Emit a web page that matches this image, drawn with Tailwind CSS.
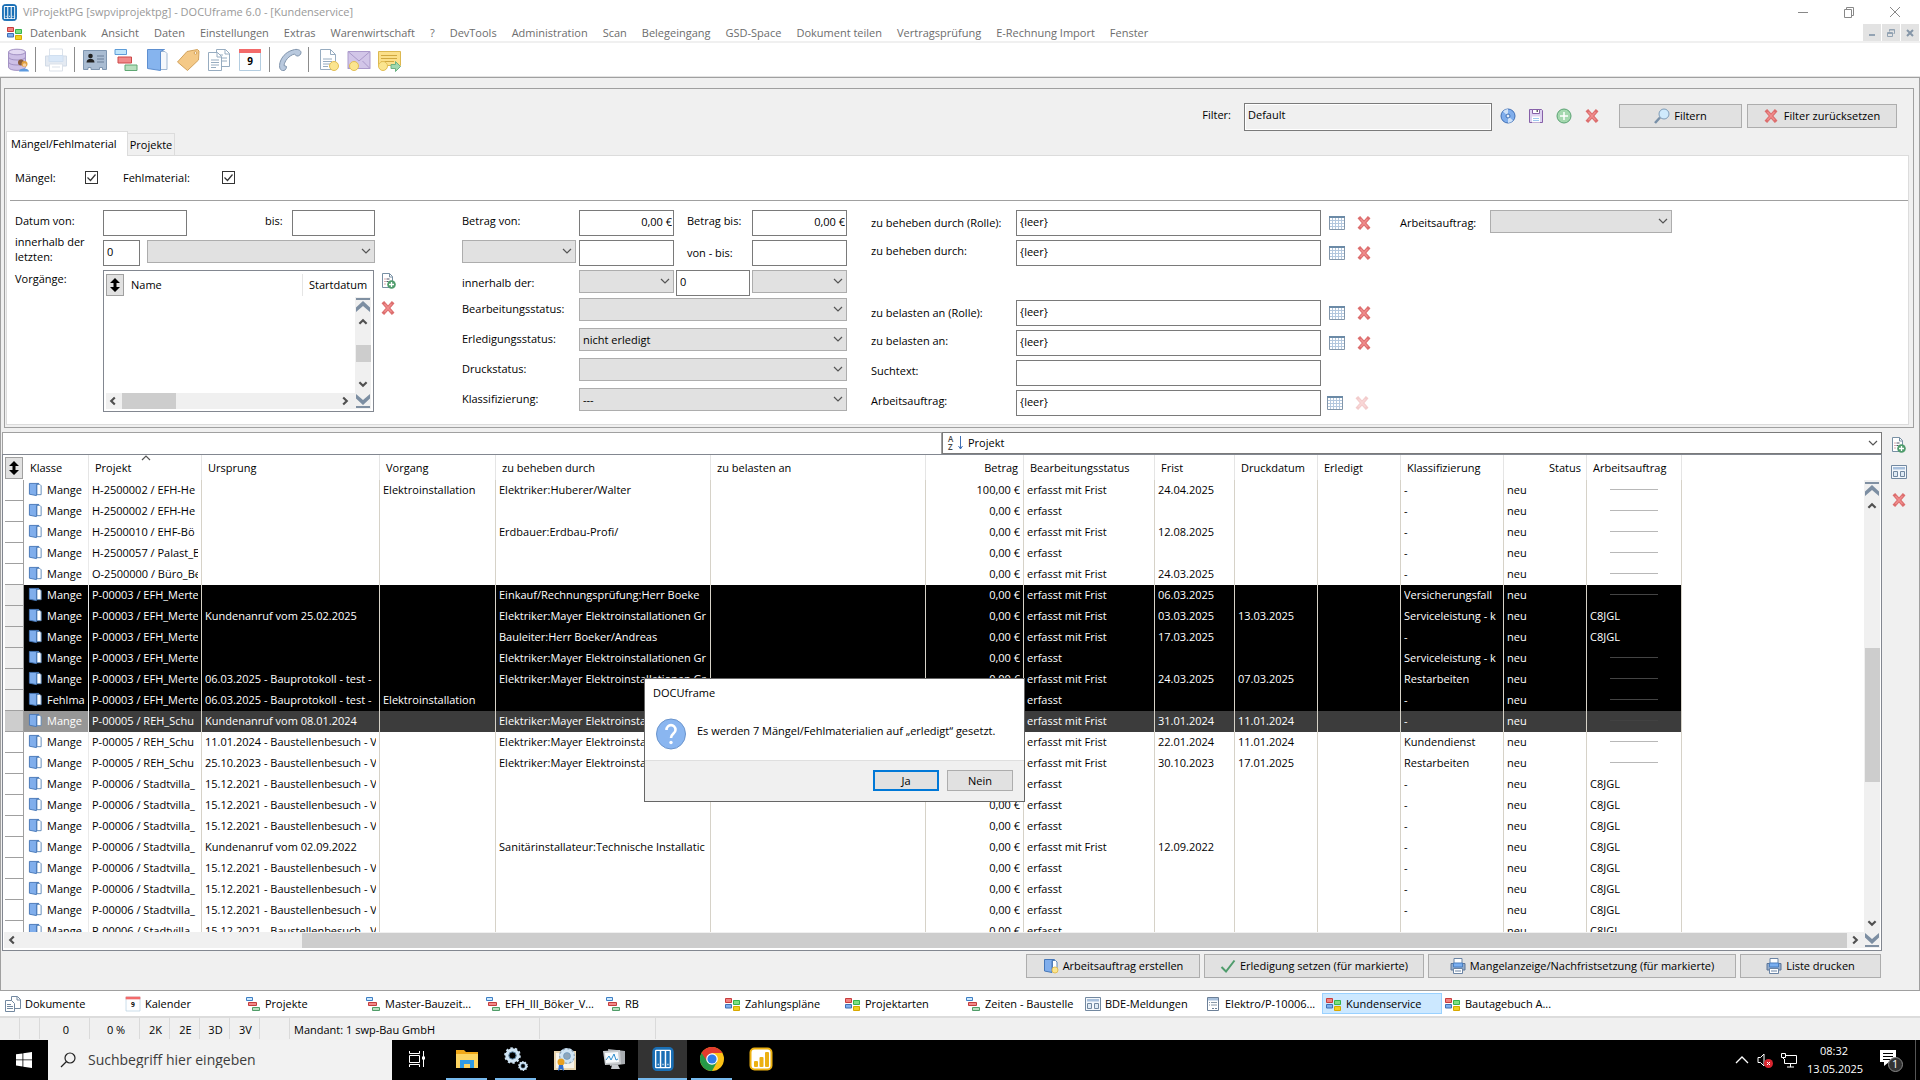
<!DOCTYPE html>
<html lang="de">
<head>
<meta charset="utf-8">
<title>ViProjektPG - DOCUframe 6.0</title>
<script src="https://cdn.jsdelivr.net/npm/@tailwindcss/browser@4"></script>
</head>
<body class="relative flex h-screen flex-col overflow-hidden bg-white font-['Open_Sans','Noto_Sans',sans-serif] text-[11px] leading-4 text-black">

<svg class="hidden" aria-hidden="true">
  <symbol id="docu" viewBox="0 0 16 18"><rect x=".5" y=".5" width="15" height="17" rx="3" fill="#1a6fb5" stroke="#1a6fb5"/><rect x="2" y="2" width="12" height="14" rx="1" fill="#fff"/><path d="M3 3h2.6v12H3zM6.700 3h2.600v12H6.700zM10.400 3H13v12h-2.600z" fill="#1a6fb5"/><path d="M4 12.500h.8v1.200H4zM7.600 12.500h.8v1.200h-.8zM11.300 12.500h.8v1.200h-.8z" fill="#fff"/></symbol>
  <symbol id="blocks" viewBox="0 0 16 14"><path d="M.5 1.500h6v4h-6z" fill="#f08080" stroke="#c83c3c"/><path d="M8.500 3.500h6v4h-6z" fill="#7ee07e" stroke="#35b24c"/><path d="M.5 7.500h6v3.500h-6z" fill="#7fb0ee" stroke="#3f6fb5"/><path d="M8.500 9.500h6v4h-6z" fill="#f0d020" stroke="#d8a800"/></symbol>
  <symbol id="gantt" viewBox="0 0 24 24"><path d="M1 1.500h11.500v5H1z" fill="#bfe6fc" stroke="#5e9cd8"/><path d="M4 9h13.500v6H4z" fill="#f08a8a" stroke="#cc4848"/><path d="M11 17h12v5.500H11z" fill="#b8e0bf" stroke="#5fa873"/></symbol>
  <symbol id="ganttS" viewBox="0 0 16 16"><path d="M1.500 1.500h6v3h-6z" fill="#cdeaff" stroke="#3f7fc4"/><path d="M3.500 6.500h8v3h-8z" fill="#f08a8a" stroke="#c43c3c"/><path d="M7.500 11.500h7v3h-7z" fill="#b8e0bf" stroke="#4f9c68"/></symbol>
  <symbol id="book" viewBox="0 0 16 16"><path d="M9.500 2.500h3l1.500 1.500v9.500H9.500z" fill="#fff" stroke="#5c86b8"/><path d="M1.500 1.500h10l-2.500 1v12l-7.500-1.500z" fill="#80aeec" stroke="#4677b8"/></symbol>
  <symbol id="bookL" viewBox="0 0 24 24"><path d="M14 3.500h6l2 2v16h-8z" fill="#f5f8fc" stroke="#9fb7d2"/><path d="M2.500 1.500h17l-4 2v19l-13-2z" fill="#86b4ee" stroke="#5e8fd0"/></symbol>
  <symbol id="xred" viewBox="0 0 14 14"><path d="M3 2.500l8 9M11 2.500l-8 9" stroke="#dc6e6e" stroke-width="3.500" stroke-linecap="square"/><path d="M3.500 3l7 8M10.500 3l-7 8" stroke="#f08c8c" stroke-width="1.500"/></symbol>
  <symbol id="cal" viewBox="0 0 16 14"><path d="M.5.500h15v13H.5z" fill="#fff" stroke="#8296aa"/><path d="M1 4.500h14M1 7.500h14M1 10.500h14M3.500 2v11M6.500 2v11M9.500 2v11M12.500 2v11" stroke="#b4c8de"/><path d="M0 0h16v2H0z" fill="#6b8aa6"/></symbol>
  <symbol id="docadd" viewBox="0 0 16 16"><path d="M1.500.500h7l3 3v11h-10z" fill="#fff" stroke="#7890a4"/><path d="M8.500.500v3.500h3" fill="none" stroke="#7890a4"/><path d="M3.500 6h1M3.500 8.500h1M3.500 11h1" stroke="#b05060"/><path d="M5.500 6h3M5.500 8.500h2" stroke="#556"/><circle cx="10.500" cy="11.500" r="4.300" fill="#4f9c6c"/><path d="M8 11.500h5M10.500 9v5" stroke="#fff" stroke-width="1.300"/></symbol>
  <symbol id="win" viewBox="0 0 16 14"><path d="M.5.500h15v13H.5z" fill="#f4f8fc" stroke="#7288a0"/><path d="M2 2h12v2.500H2z" fill="#a8c0dc"/><path d="M2.500 6.500h4v5h-4zM9.500 6.500h4v5h-4z" fill="#dfeaf4" stroke="#7288a0"/></symbol>
  <symbol id="form" viewBox="0 0 16 16"><path d="M2.500 1.500h11v13h-11z" fill="#fff" stroke="#6c8098"/><path d="M3 2h10v2.500H3z" fill="#a8c0dc"/><path d="M4 6.500h8M4 9h8" stroke="#8898a8" stroke-dasharray="1 1 6 1"/><path d="M7 12.500h2M10 12.500h2" stroke="#6c8098"/></symbol>
  <symbol id="docs" viewBox="0 0 24 24"><path d="M9.500 1.500h9l4 4v13h-13z" fill="#fff" stroke="#97acc0"/><path d="M18 1.500v4.500h4.500M12 7h4M12 10h8M12 13h8" fill="none" stroke="#97acc0"/><path d="M1.500 4.500h9l4 4v14h-13z" fill="#fff" stroke="#97acc0"/><path d="M10 4.500v4.500h4.500M4 12h8M4 14.500h8M4 17h8M4 19.500h5" fill="none" stroke="#97acc0"/></symbol>
  <symbol id="docsS" viewBox="0 0 16 16"><path d="M6.500.500h6l3 3v9h-9z" fill="#fff" stroke="#7288a0"/><path d="M12 .5v3.500h3.500" fill="none" stroke="#7288a0"/><path d="M.5 4.500h6l3 3v8h-9z" fill="#fff" stroke="#7288a0"/><path d="M2 8.500h4M2 10.500h6M2 12.500h6" stroke="#7288a0"/></symbol>
  <symbol id="cal9" viewBox="0 0 24 24"><path d="M1.500 1.500h21v21h-21z" fill="#fdfeff" stroke="#b4cde0"/><path d="M1 1h22v4H1z" fill="#f26a6a"/><text x="12" y="17" text-anchor="middle" font-size="10" font-weight="700" fill="#000">9</text></symbol>
  <symbol id="check" viewBox="0 0 16 14"><path d="M1.500 8l4.500 4.500L14.500 1.500" fill="none" stroke="#4f9c6c" stroke-width="2"/></symbol>
  <symbol id="printer" viewBox="0 0 16 16"><path d="M1 5.500h14v6.500H1z" fill="#93abcb" stroke="#5d7698"/><path d="M4 .5h8v5H4z" fill="#fff" stroke="#6b84a4"/><path d="M3.500 5h9v4h-9z" fill="#79aef0" stroke="#4a7fc0"/><path d="M3.500 10.500h9v5h-9z" fill="#fff" stroke="#6b84a4"/><path d="M5 13h6" stroke="#6b84a4"/></symbol>
  <symbol id="down" viewBox="0 0 10 6"><path d="M1 1l4 4 4-4" fill="none" stroke="#555" stroke-width="1.200"/></symbol>
  <symbol id="arr" viewBox="0 0 10 8"><path d="M2 5.500l3-3 3 3" fill="none" stroke="#505050" stroke-width="1.800"/></symbol>
  <symbol id="top" viewBox="0 0 16 16"><path d="M1 1h14v2H1z" fill="#8090a2"/><path d="M8 4l7 6.500V15L8 9 1 15v-4.500z" fill="#7c8ea2"/></symbol>
  <symbol id="updown" viewBox="0 0 10 14"><path d="M5 0l5 5H6.500v4H10l-5 5-5-5h3.500V5H0z"/></symbol>
  <symbol id="gear" viewBox="0 0 20 20"><circle cx="10" cy="10" r="6.500" fill="none" stroke="#cfe4f4" stroke-width="4"/><circle cx="10" cy="10" r="8.700" fill="none" stroke="#cfe4f4" stroke-width="2.200" stroke-dasharray="2.800 2.660"/><circle cx="10" cy="10" r="4.200" fill="none" stroke="#6d9cc0" stroke-width="1"/></symbol>
</svg>

<header class="flex h-6 shrink-0 items-center pl-[2px]">
  <svg class="h-[17px] w-[15px]"><use href="#docu"/></svg>
  <h1 class="ml-1.5 text-[#999]">ViProjektPG [swpviprojektpg] - DOCUframe 6.0 - [Kundenservice]</h1>
  <div class="ml-auto flex gap-[34px] pr-[19px]">
    <button aria-label="Minimieren"><svg class="size-3" viewBox="0 0 12 12"><path d="M1 6.500h10" stroke="#888"/></svg></button>
    <button aria-label="Wiederherstellen"><svg class="size-3" viewBox="0 0 12 12" fill="none" stroke="#888"><path d="M1.500 3.500h7v8h-7zM3.500 3.500v-2h7v8h-2"/></svg></button>
    <button aria-label="Schließen"><svg class="size-3" viewBox="0 0 12 12" stroke="#888"><path d="M1 1l10 10M11 1L1 11"/></svg></button>
  </div>
</header>

<nav class="flex h-[19px] shrink-0 items-center border-b-2 border-[#f0f0f0] pl-[7px] text-[#6d6d6d]">
  <svg class="mr-[7px] h-[14px] w-[16px]"><use href="#blocks"/></svg>
  <div class="flex gap-[15px]">
    <a href="#">Datenbank</a><a href="#">Ansicht</a><a href="#">Daten</a><a href="#">Einstellungen</a><a href="#">Extras</a><a href="#">Warenwirtschaft</a><a href="#">?</a><a href="#">DevTools</a><a href="#">Administration</a><a href="#">Scan</a><a href="#">Belegeingang</a><a href="#">GSD-Space</a><a href="#">Dokument teilen</a><a href="#">Vertragsprüfung</a><a href="#">E-Rechnung Import</a><a href="#">Fenster</a>
  </div>
  <div class="ml-auto flex gap-px pr-px">
    <button class="flex h-[17px] w-[18px] items-center justify-center bg-[#e3e3e3]" aria-label="Fenster minimieren"><svg class="size-2" viewBox="0 0 8 8"><path d="M1 6h6" stroke="#93a3b3" stroke-width="2"/></svg></button>
    <button class="flex h-[17px] w-[18px] items-center justify-center bg-[#e3e3e3]" aria-label="Fenster wiederherstellen"><svg class="size-2" viewBox="0 0 8 8" fill="none" stroke="#93a3b3"><path d="M.5 3.500h5v4h-5zM.5 4.500h5M2.500 2.500v-2h5v4h-1M2.500 1h5"/></svg></button>
    <button class="flex h-[17px] w-[18px] items-center justify-center bg-[#e3e3e3]" aria-label="Fenster schließen"><svg class="size-2" viewBox="0 0 8 8"><path d="M1 1l6 6M7 1L1 7" stroke="#8596a8" stroke-width="2"/></svg></button>
  </div>
</nav>

<div class="flex h-[34px] shrink-0 items-center border-b border-[#e3e3e3] pl-[6px]" role="toolbar">
  <button aria-label="Datenbank"><svg class="size-6" viewBox="0 0 24 24"><path d="M2.500 4v15c0 4.500 17 4.500 17 0V4" fill="#cdbfe6" stroke="#a392c4"/><ellipse cx="11" cy="4" rx="8.500" ry="2.800" fill="#e2d8f2" stroke="#a392c4"/><path d="M2.500 9c0 4 17 4 17 0M2.500 14c0 4 17 4 17 0" fill="none" stroke="#a392c4"/><circle cx="15" cy="14.500" r="3" fill="#8a5b3c"/><circle cx="18.500" cy="16" r="3" fill="#e0a040"/><circle cx="18.500" cy="17" r="1.800" fill="#f4cfa4"/><path d="M13 23.500c0-4 10-4 10 0z" fill="#5d9be0"/></svg></button>
  <span class="ml-[5px] h-[25px] w-px bg-[#8c8c8c]"></span>
  <button class="ml-2" aria-label="Drucken" disabled><svg class="size-6 opacity-40" viewBox="0 0 24 24"><path d="M1.500 8h21v10h-21z" fill="#bccbe0" stroke="#8fa6c4"/><path d="M5.500 1h13v7h-13z" fill="#fff" stroke="#a9b8cc"/><path d="M5 7.500h14v6H5z" fill="#a5c8f0" stroke="#8bb0dc"/><path d="M5.500 16h13v7h-13z" fill="#fff" stroke="#a9b8cc"/><path d="M8 19h8" stroke="#a9b8cc"/></svg></button>
  <span class="ml-[6px] h-[25px] w-px bg-[#8c8c8c]"></span>
  <div class="ml-2 flex gap-[7px]">
    <button aria-label="Adressen"><svg class="size-6" viewBox="0 0 24 24"><path d="M.5 2.500h23v19h-4v-2h-3v2H8v-2H5v2H.5z" fill="#a9bcd2" stroke="#7f96b0"/><circle cx="7.500" cy="8" r="2.300" fill="#222"/><path d="M3.500 14.500c0-5 8-5 8 0z" fill="#222"/><path d="M14 8h7M14 11h7M14 14h7" stroke="#6a7f98"/></svg></button>
    <button aria-label="Projekte"><svg class="size-6"><use href="#gantt"/></svg></button>
    <button aria-label="Vorgänge"><svg class="size-6"><use href="#bookL"/></svg></button>
    <button aria-label="Artikel"><svg class="size-6" viewBox="0 0 24 24"><path d="M1.500 14L11 3.500l10.500-2 1.500 1.500-.5 9L11.500 22.500z" fill="#f4c987" stroke="#d2a25c"/><circle cx="19.500" cy="5" r="1.300" fill="#fff" stroke="#d2a25c"/></svg></button>
    <button aria-label="Dokumente"><svg class="size-6"><use href="#docs"/></svg></button>
    <button aria-label="Kalender"><svg class="size-6"><use href="#cal9"/></svg></button>
  </div>
  <span class="ml-[7px] h-[25px] w-px bg-[#8c8c8c]"></span>
  <button class="ml-2" aria-label="Telefon"><svg class="size-6" viewBox="0 0 24 24"><path d="M15 2c4-1.500 8 0 8 2.500 0 2-2 4-4.500 3.500l-2-2C11 7.500 6.500 13 6 17.500l2.500 1c0 3-2 4.500-4 4C1 22 1 17 2.500 13 5 7 9.500 3.500 15 2z" fill="#b9c9de" stroke="#8094ac"/></svg></button>
  <span class="ml-[6px] h-[25px] w-px bg-[#8c8c8c]"></span>
  <div class="ml-2 flex gap-[6px]">
    <button aria-label="Neues Dokument"><svg class="size-6" viewBox="0 0 24 24"><path d="M3.500 1.500h10l5 5v15h-15z" fill="#fff" stroke="#97acc0"/><path d="M13.500 1.500v5h5M6 11h9M6 13.500h9M6 16h7M6 18.500h5" fill="none" stroke="#97acc0"/><circle cx="17" cy="18" r="4.500" fill="#fbe58f" stroke="#e3bf55"/></svg></button>
    <button aria-label="Neue E-Mail"><svg class="size-6" viewBox="0 0 24 24"><path d="M1 3.500h22v17H1z" fill="#d2c6e8" stroke="#ab9acb"/><path d="M1 3.500L12 13l11-9.500M1 20.500L8.500 13M23 20.500L15.500 13" fill="none" stroke="#ab9acb"/><circle cx="7" cy="18" r="4.500" fill="#fbe58f" stroke="#e3bf55"/></svg></button>
    <button aria-label="Neue Notiz"><svg class="size-6" viewBox="0 0 24 24"><path d="M1.500 3.500h22v14h-22z" fill="#fbe08a" stroke="#dcb850"/><path d="M4 7.500h16M4 10.500h16M4 13.500h13" stroke="#d0a840"/><circle cx="6" cy="18" r="4.500" fill="#fbe58f" stroke="#e3bf55"/><path d="M14 16.500h4.500v-3l5 5-5 5v-3H14z" fill="#9fd8ae" stroke="#6bb282"/></svg></button>
  </div>
</div>

<main class="flex min-h-0 flex-1 flex-col border border-[#a0a0a0] bg-[#f0f0f0]">

  <section class="mt-[10px] mr-[5px] ml-[3px] flex shrink-0 flex-col border border-[#a0a0a0] pb-[2px]">
    <div class="flex items-center justify-end pt-3 pr-4">
      <label for="filter" class="mr-[13px] pb-[2px]">Filter:</label>
      <input id="filter" value="Default" class="mt-[2px] h-7 w-[248px] border border-[#7a7a7a] bg-transparent px-[3px] pb-[5px] shadow-[inset_0_0_0_1px_#fff]">
      <div class="ml-2 flex items-center gap-3">
        <button aria-label="Laden"><svg class="size-4" viewBox="0 0 16 16"><circle cx="8" cy="8" r="7" fill="#80aeec" stroke="#3f6fb5"/><path d="M8 8L3 3.500A7 7 0 0 1 8 1zM8 8l5 4.500A7 7 0 0 1 8 15z" fill="#cfe2f8"/><circle cx="8" cy="8" r="2" fill="#e8f0fa" stroke="#3f6fb5"/></svg></button>
        <button aria-label="Speichern"><svg class="size-4" viewBox="0 0 16 16"><path d="M1.500 1.500h12l1 1v12h-13z" fill="#ddd2f0" stroke="#8660a8"/><path d="M4.500 1.500h7v4h-7z" fill="#fff" stroke="#8660a8"/><path d="M8.500 2h1.500v2H8.500z" fill="#666"/><path d="M4 8.500h8v6H4z" fill="#fff"/><path d="M5 10.500h6M5 12.500h6" stroke="#9cc8ee"/></svg></button>
        <button aria-label="Hinzufügen"><svg class="size-4" viewBox="0 0 16 16"><circle cx="8" cy="8" r="7" fill="#a4d8ae" stroke="#5aa273"/><path d="M4 8h8M8 4v8" stroke="#fff" stroke-width="1.500"/></svg></button>
        <button aria-label="Löschen" class="w-4"><svg class="mx-auto size-[14px]"><use href="#xred"/></svg></button>
      </div>
      <button class="ml-[19px] flex h-6 w-[123px] items-center justify-center gap-1 border border-[#adadad] bg-[#e1e1e1] pb-px"><svg class="size-4" viewBox="0 0 16 16"><path d="M1 15l5-5.500" stroke="#7890a8" stroke-width="2.500"/><circle cx="10" cy="6" r="5" fill="#cfeafc" stroke="#7e9cb8"/></svg>Filtern</button>
      <button class="ml-[5px] flex h-6 w-[150px] items-center justify-center gap-1.5 border border-[#adadad] bg-[#e1e1e1] pb-px"><svg class="size-[14px]"><use href="#xred"/></svg>Filter zurücksetzen</button>
    </div>
    <div class="ml-px flex h-6 items-end">
      <button class="z-10 -mb-px h-[25px] w-[122px] border border-b-0 border-[#dcdcdc] bg-white pb-px pl-1 text-left">Mängel/Fehlmaterial</button>
      <button class="h-[22px] w-[47px] border border-l-0 border-b-0 border-[#dcdcdc] bg-[#f0f0f0]">Projekte</button>
    </div>
    <div class="mr-1 ml-px border border-[#dcdcdc] bg-white">
      <div class="ml-[3px] flex h-[45px] items-center border-b border-[#a0a0a0] pb-px pl-[5px]">
        <label for="maengel" class="w-[70px]">Mängel:</label>
        <span class="relative size-[13px]"><input id="maengel" type="checkbox" checked class="block size-[13px] appearance-none border border-[#333] bg-white"><svg class="pointer-events-none absolute inset-0 size-[13px]" viewBox="0 0 13 13"><path d="M2.500 6.500l3 3 5-6" fill="none" stroke="#333" stroke-width="1.200"/></svg></span>
        <label for="fehl" class="ml-[25px] w-[99px]">Fehlmaterial:</label>
        <span class="relative size-[13px]"><input id="fehl" type="checkbox" checked class="block size-[13px] appearance-none border border-[#333] bg-white"><svg class="pointer-events-none absolute inset-0 size-[13px]" viewBox="0 0 13 13"><path d="M2.500 6.500l3 3 5-6" fill="none" stroke="#333" stroke-width="1.200"/></svg></span>
      </div>

      <div class="flex pt-[9px] pb-[4px] pl-2">
        <!-- Datum und Vorgänge -->
        <div class="w-[447px]">
          <div class="flex h-[30px] items-start">
            <label for="dvon" class="w-[88px] leading-[22px]">Datum von:</label>
            <input id="dvon" class="h-[26px] w-[84px] border border-[#7a7a7a]">
            <label for="dbis" class="ml-[78px] w-[27px] leading-[22px]">bis:</label>
            <input id="dbis" class="h-[26px] w-[83px] border border-[#7a7a7a]">
          </div>
          <div class="flex h-[30px] items-start">
            <label for="letzte" class="-mt-1.5 w-[88px] leading-[15px]">innerhalb der<br>letzten:</label>
            <input id="letzte" value="0" class="h-[26px] w-[37px] border border-[#7a7a7a] px-[3px] pb-[3px]">
            <div class="relative ml-[7px] w-[228px]"><select aria-label="Zeiteinheit" class="h-[23px] w-full appearance-none border border-[#adadad] bg-[#e1e1e1]"></select><svg class="pointer-events-none absolute top-2 right-1 h-[6px] w-[10px]"><use href="#down"/></svg></div>
          </div>
          <div class="flex items-start">
            <span class="w-[88px] leading-[18px]">Vorgänge:</span>
            <div class="flex h-[142px] w-[271px] flex-col border border-[#828790] p-[2px]">
              <div class="flex h-6 items-center">
                <button aria-label="Sortieren" class="flex h-[22px] w-[18px] items-center justify-center border border-[#a0a0a0] bg-[#e1e1e1]"><svg class="h-[14px] w-[10px]"><use href="#updown"/></svg></button>
                <span class="w-[179px] border-r border-[#e5e5e5] pl-[7px] leading-[22px]">Name</span>
                <span class="pl-1.5 leading-[22px]">Startdatum</span>
              </div>
              <div class="flex min-h-0 flex-1 justify-end">
                <div class="flex w-4 flex-col items-center bg-[#f0f0f0]">
                  <svg class="size-4 shrink-0"><use href="#top"/></svg>
                  <svg class="mt-1 h-[10px] w-[12px]"><use href="#arr"/></svg>
                  <span class="flex-1"></span><span class="h-[17px] w-[15px] bg-[#cdcdcd]"></span><span class="flex-1"></span>
                  <svg class="mb-1 h-[10px] w-[12px] rotate-180"><use href="#arr"/></svg>
                </div>
              </div>
              <div class="flex h-4 items-center bg-[#f0f0f0]">
                <svg class="ml-px h-[10px] w-[12px] -rotate-90"><use href="#arr"/></svg>
                <span class="ml-[3px] h-4 w-[54px] bg-[#cdcdcd]"></span>
                <svg class="ml-auto h-[10px] w-[12px] rotate-90"><use href="#arr"/></svg>
                <svg class="ml-1 size-4 rotate-180"><use href="#top"/></svg>
              </div>
            </div>
            <div class="ml-[7px] flex flex-col gap-3 pt-[3px]">
              <button aria-label="Vorgang hinzufügen"><svg class="size-4"><use href="#docadd"/></svg></button>
              <button aria-label="Vorgang löschen"><svg class="size-[14px]"><use href="#xred"/></svg></button>
            </div>
          </div>
        </div>

        <!-- Beträge und Status -->
        <div class="w-[409px]">
          <div class="flex h-[30px] items-start">
            <label for="bvon" class="w-[117px] leading-[22px]">Betrag von:</label>
            <input id="bvon" value="0,00 €" class="h-[26px] w-[95px] border border-[#7a7a7a] px-px pb-[3px] text-right">
            <label for="bbis" class="ml-[13px] w-[65px] leading-[22px]">Betrag bis:</label>
            <input id="bbis" value="0,00 €" class="h-[26px] w-[95px] border border-[#7a7a7a] px-px pb-[3px] text-right">
          </div>
          <div class="flex h-[30px] items-start">
            <div class="relative mr-[3px] w-[114px]"><select aria-label="Datumsart" class="h-[23px] w-full appearance-none border border-[#adadad] bg-[#e1e1e1]"></select><svg class="pointer-events-none absolute top-2 right-1 h-[6px] w-[10px]"><use href="#down"/></svg></div>
            <input id="von" aria-label="von" class="h-[26px] w-[95px] border border-[#7a7a7a]">
            <label for="vbis" class="ml-[13px] w-[65px] leading-[26px]">von - bis:</label>
            <input id="vbis" class="h-[26px] w-[95px] border border-[#7a7a7a]">
          </div>
          <div class="flex h-7 items-start">
            <label for="inn" class="w-[117px] leading-[26px]">innerhalb der:</label>
            <div class="relative w-[95px]"><select aria-label="Richtung" class="h-[23px] w-full appearance-none border border-[#adadad] bg-[#e1e1e1]"></select><svg class="pointer-events-none absolute top-2 right-1 h-[6px] w-[10px]"><use href="#down"/></svg></div>
            <input id="inn" value="0" class="mx-[2px] h-[26px] w-[74px] border border-[#7a7a7a] px-[3px] pb-[3px]">
            <div class="relative w-[95px]"><select aria-label="Einheit" class="h-[23px] w-full appearance-none border border-[#adadad] bg-[#e1e1e1]"></select><svg class="pointer-events-none absolute top-2 right-1 h-[6px] w-[10px]"><use href="#down"/></svg></div>
          </div>
          <div class="flex h-[30px] items-start">
            <label for="bst" class="w-[117px] leading-[22px]">Bearbeitungsstatus:</label>
            <div class="relative w-[268px]"><select id="bst" class="h-[23px] w-full appearance-none border border-[#adadad] bg-[#e1e1e1]"></select><svg class="pointer-events-none absolute top-2 right-1 h-[6px] w-[10px]"><use href="#down"/></svg></div>
          </div>
          <div class="flex h-[30px] items-start">
            <label for="est" class="w-[117px] leading-[22px]">Erledigungsstatus:</label>
            <div class="relative w-[268px]"><select id="est" class="h-[23px] w-full appearance-none border border-[#adadad] bg-[#e1e1e1] px-[3px]"><option>nicht erledigt</option></select><svg class="pointer-events-none absolute top-2 right-1 h-[6px] w-[10px]"><use href="#down"/></svg></div>
          </div>
          <div class="flex h-[30px] items-start">
            <label for="dst" class="w-[117px] leading-[22px]">Druckstatus:</label>
            <div class="relative w-[268px]"><select id="dst" class="h-[23px] w-full appearance-none border border-[#adadad] bg-[#e1e1e1]"></select><svg class="pointer-events-none absolute top-2 right-1 h-[6px] w-[10px]"><use href="#down"/></svg></div>
          </div>
          <div class="flex h-[30px] items-start">
            <label for="kst" class="w-[117px] leading-[22px]">Klassifizierung:</label>
            <div class="relative w-[268px]"><select id="kst" class="h-[23px] w-full appearance-none border border-[#adadad] bg-[#e1e1e1] px-[3px]"><option>---</option></select><svg class="pointer-events-none absolute top-2 right-1 h-[6px] w-[10px]"><use href="#down"/></svg></div>
          </div>
        </div>

        <!-- Zuständige -->
        <div class="w-[529px]">
          <div class="flex h-[30px] items-start">
            <label for="z1" class="w-[145px] leading-[26px]">zu beheben durch (Rolle):</label>
            <input id="z1" value="{leer}" class="h-[26px] w-[305px] border border-[#7a7a7a] px-[3px] pb-[3px]">
            <button aria-label="Auswählen" class="mt-[6px] ml-2"><svg class="h-[14px] w-4"><use href="#cal"/></svg></button>
            <button aria-label="Leeren" class="mt-[6px] ml-3"><svg class="size-[14px]"><use href="#xred"/></svg></button>
          </div>
          <div class="flex h-[60px] items-start">
            <label for="z2" class="w-[145px] leading-[22px]">zu beheben durch:</label>
            <input id="z2" value="{leer}" class="h-[26px] w-[305px] border border-[#7a7a7a] px-[3px] pb-[3px]">
            <button aria-label="Auswählen" class="mt-[6px] ml-2"><svg class="h-[14px] w-4"><use href="#cal"/></svg></button>
            <button aria-label="Leeren" class="mt-[6px] ml-3"><svg class="size-[14px]"><use href="#xred"/></svg></button>
          </div>
          <div class="flex h-[30px] items-start">
            <label for="z3" class="w-[145px] leading-[26px]">zu belasten an (Rolle):</label>
            <input id="z3" value="{leer}" class="h-[26px] w-[305px] border border-[#7a7a7a] px-[3px] pb-[3px]">
            <button aria-label="Auswählen" class="mt-[6px] ml-2"><svg class="h-[14px] w-4"><use href="#cal"/></svg></button>
            <button aria-label="Leeren" class="mt-[6px] ml-3"><svg class="size-[14px]"><use href="#xred"/></svg></button>
          </div>
          <div class="flex h-[30px] items-start">
            <label for="z4" class="w-[145px] leading-[22px]">zu belasten an:</label>
            <input id="z4" value="{leer}" class="h-[26px] w-[305px] border border-[#7a7a7a] px-[3px] pb-[3px]">
            <button aria-label="Auswählen" class="mt-[6px] ml-2"><svg class="h-[14px] w-4"><use href="#cal"/></svg></button>
            <button aria-label="Leeren" class="mt-[6px] ml-3"><svg class="size-[14px]"><use href="#xred"/></svg></button>
          </div>
          <div class="flex h-[30px] items-start">
            <label for="z5" class="w-[145px] leading-[22px]">Suchtext:</label>
            <input id="z5" class="h-[26px] w-[305px] border border-[#7a7a7a] px-[3px]">
          </div>
          <div class="flex h-[30px] items-start">
            <label for="z6" class="w-[145px] leading-[22px]">Arbeitsauftrag:</label>
            <input id="z6" value="{leer}" class="h-[26px] w-[305px] border border-[#7a7a7a] px-[3px] pb-[3px]">
            <button aria-label="Auswählen" class="mt-[6px] ml-1.5"><svg class="h-[14px] w-4"><use href="#cal"/></svg></button>
            <button aria-label="Leeren" class="mt-[6px] ml-3 opacity-35" disabled><svg class="size-[14px]"><use href="#xred"/></svg></button>
          </div>
        </div>

        <div class="flex items-start">
          <label for="aa" class="w-[90px] leading-[26px]">Arbeitsauftrag:</label>
          <div class="relative w-[182px]"><select id="aa" class="h-[23px] w-full appearance-none border border-[#adadad] bg-[#e1e1e1]"></select><svg class="pointer-events-none absolute top-2 right-1 h-[6px] w-[10px]"><use href="#down"/></svg></div>
        </div>
      </div>
    </div>
  </section>

  <div class="mt-1 ml-px flex min-h-0 flex-1">
    <div class="flex min-w-0 flex-1 flex-col">
      <div class="flex h-[22px] shrink-0">
        <input aria-label="Suche" class="w-1/2 border border-b-0 border-[#a0a0a0] bg-white px-1">
        <div class="relative w-1/2">
          <select aria-label="Sortierung" class="h-[22px] w-full appearance-none border border-[#7a7a7a] bg-white pl-[25px]"><option>Projekt</option></select>
          <svg class="pointer-events-none absolute top-[3px] left-1.5 h-4 w-4 overflow-visible" viewBox="0 0 16 16"><text x="0" y="7" font-size="8" font-weight="600" fill="#444">A</text><text x="0" y="15" font-size="8" font-weight="600" fill="#444">Z</text><path d="M12.500 1v13M10.500 11l2 3 2-3" fill="none" stroke="#3f6fb5"/></svg>
          <svg class="pointer-events-none absolute top-2 right-1 h-[6px] w-[10px]"><use href="#down"/></svg>
        </div>
      </div>
      <div class="flex min-h-0 flex-1 flex-col border border-[#828790] bg-white pb-[2px]">
        <div class="flex min-h-0 flex-1">
          <div class="min-w-0 flex-1 overflow-hidden pl-[2px]">
            <table class="w-[1677px] table-fixed border-separate border-spacing-0">
              <colgroup><col class="w-[19px]"><col class="w-[65px]"><col class="w-[113px]"><col class="w-[178px]"><col class="w-[116px]"><col class="w-[215px]"><col class="w-[215px]"><col class="w-[98px]"><col class="w-[131px]"><col class="w-[80px]"><col class="w-[83px]"><col class="w-[83px]"><col class="w-[103px]"><col class="w-[83px]"><col class="w-[95px]"></colgroup>
              <thead>
                <tr class="h-[25px] text-left *:border-r *:border-[#e5e5e5] *:pr-[5px] *:pl-1.5 *:font-normal">
                  <th class="!border-r-0 !p-0"><button aria-label="Sortieren" class="flex h-[22px] w-[18px] items-center justify-center border border-[#a0a0a0] bg-[#e1e1e1]"><svg class="h-[14px] w-[10px]"><use href="#updown"/></svg></button></th>
                  <th>Klasse</th>
                  <th class="relative">Projekt<svg class="absolute top-0 left-1/2 -ml-1 h-[6px] w-[10px] rotate-180"><use href="#down"/></svg></th>
                  <th>Ursprung</th><th>Vorgang</th><th>zu beheben durch</th><th>zu belasten an</th><th class="text-right">Betrag</th><th>Bearbeitungsstatus</th><th>Frist</th><th>Druckdatum</th><th>Erledigt</th><th>Klassifizierung</th><th class="text-right">Status</th><th>Arbeitsauftrag</th>
                </tr>
              </thead>
              <tbody id="rows"></tbody>
            </table>
          </div>
          <div class="mt-[25px] mr-px flex w-4 flex-col items-center bg-[#f0f0f0]">
            <svg class="mt-px size-4 shrink-0"><use href="#top"/></svg>
            <svg class="mt-1 h-[10px] w-[12px] shrink-0"><use href="#arr"/></svg>
            <span class="flex-1"></span><span class="h-[134px] w-[15px] bg-[#cdcdcd]"></span><span class="flex-1"></span>
            <svg class="mb-1 h-[10px] w-[12px] shrink-0 rotate-180"><use href="#arr"/></svg>
          </div>
        </div>
        <div class="mr-px ml-px flex h-4 shrink-0 items-center bg-[#f0f0f0]">
          <svg class="mx-[2px] h-[10px] w-[12px] -rotate-90"><use href="#arr"/></svg>
          <span class="flex-[282]"></span><span class="h-[15px] flex-[1544] bg-[#cdcdcd]"></span>
          <svg class="mx-[2px] h-[10px] w-[12px] rotate-90"><use href="#arr"/></svg>
          <svg class="ml-px size-4 rotate-180"><use href="#top"/></svg>
        </div>
      </div>
    </div>
    <div class="flex w-[37px] flex-col items-center gap-3 pt-[5px] pr-1">
      <button aria-label="Neu"><svg class="size-4"><use href="#docadd"/></svg></button>
      <button aria-label="Ansicht"><svg class="h-[14px] w-4"><use href="#win"/></svg></button>
      <button aria-label="Löschen" class="mt-[2px]"><svg class="size-[14px]"><use href="#xred"/></svg></button>
    </div>
  </div>

  <div class="flex h-[39px] shrink-0 justify-end gap-1 pt-[3px] pr-[38px]">
    <button class="flex h-6 w-[174px] items-center justify-center gap-1 border border-[#adadad] bg-[#e1e1e1]"><svg class="size-4" viewBox="0 0 16 16"><use href="#book" width="16" height="16"/><circle cx="12" cy="12" r="3" fill="#fbe58f" stroke="#e3bf55"/></svg>Arbeitsauftrag erstellen</button>
    <button class="flex h-6 w-[220px] items-center justify-center gap-1 border border-[#adadad] bg-[#e1e1e1]"><svg class="h-[14px] w-4"><use href="#check"/></svg>Erledigung setzen (für markierte)</button>
    <button class="flex h-6 w-[308px] items-center justify-center gap-1 border border-[#adadad] bg-[#e1e1e1]"><svg class="size-4"><use href="#printer"/></svg>Mangelanzeige/Nachfristsetzung (für markierte)</button>
    <button class="flex h-6 w-[141px] items-center justify-center gap-1 border border-[#adadad] bg-[#e1e1e1]"><svg class="size-4"><use href="#printer"/></svg>Liste drucken</button>
  </div>
</main>

<nav class="flex h-[27px] shrink-0 items-center border-b-2 border-[#dcdcdc] pl-[2px] *:flex *:h-[21px] *:w-[120px] *:items-center *:gap-1 *:px-[3px] *:whitespace-nowrap">
  <a href="#"><svg class="size-4"><use href="#docsS"/></svg>Dokumente</a>
  <a href="#"><svg class="size-4"><use href="#cal9"/></svg>Kalender</a>
  <a href="#"><svg class="size-4"><use href="#ganttS"/></svg>Projekte</a>
  <a href="#"><svg class="size-4"><use href="#ganttS"/></svg>Master-Bauzeit...</a>
  <a href="#"><svg class="size-4"><use href="#ganttS"/></svg>EFH_III_Böker_V...</a>
  <a href="#"><svg class="size-4"><use href="#ganttS"/></svg>RB</a>
  <a href="#"><svg class="h-[14px] w-4"><use href="#blocks"/></svg>Zahlungspläne</a>
  <a href="#"><svg class="h-[14px] w-4"><use href="#blocks"/></svg>Projektarten</a>
  <a href="#"><svg class="size-4"><use href="#ganttS"/></svg>Zeiten - Baustelle</a>
  <a href="#"><svg class="h-[14px] w-4"><use href="#win"/></svg>BDE-Meldungen</a>
  <a href="#"><svg class="size-4"><use href="#form"/></svg>Elektro/P-10006...</a>
  <a href="#" class="border border-[#99d1ff] bg-[#cce8ff]"><svg class="h-[14px] w-4"><use href="#blocks"/></svg>Kundenservice</a>
  <a href="#"><svg class="h-[14px] w-4"><use href="#blocks"/></svg>Bautagebuch A...</a>
</nav>

<div class="flex h-[22px] shrink-0 bg-[#f0f0f0] pb-px text-center leading-6 *:border-r *:border-[#dadada]" role="status">
  <span class="w-5"></span><span class="w-5"></span><span class="w-[50px] pl-[3px]">0</span><span class="w-[50px] pl-[3px]">0 %</span><span class="w-[30px] pl-[2px]">2K</span><span class="w-[30px] pl-[2px]">2E</span><span class="w-[30px] pl-[2px]">3D</span><span class="w-[30px] pl-[2px]">3V</span><span class="w-[30px]"></span><span class="w-[250px] pl-1 text-left">Mandant: 1 swp-Bau GmbH</span><span class="w-[116px]"></span>
</div>

<footer class="flex h-10 shrink-0 bg-black text-white">
  <button aria-label="Start" class="flex w-12 items-center justify-center"><svg class="size-4" viewBox="0 0 16 16" fill="#fff"><path d="M0 2.300l6.500-.9v6.100H0zM7.300 1.300L16 0v7.500H7.300zM0 8.300h6.500v6.200L0 13.600zM7.300 8.300H16V16l-8.700-1.200z"/></svg></button>
  <label class="flex w-[344px] items-center gap-3 bg-[#f2f2f2] pl-3">
    <svg class="size-4" viewBox="0 0 16 16" fill="none" stroke="#222" stroke-width="1.200"><circle cx="10" cy="6" r="5"/><path d="M6.500 9.500L1 15"/></svg>
    <input aria-label="Suche" placeholder="Suchbegriff hier eingeben" class="flex-1 text-[14px] placeholder:text-[#3c3c3c]">
  </label>
  <div class="flex *:flex *:items-center *:justify-center *:border-b-2">
    <button aria-label="Aktive Anwendungen" class="w-[50px] border-transparent"><svg class="size-4" viewBox="0 0 16 16" fill="none" stroke="#fff"><path d="M.5 4.500h10v7H.5zM.5 0v2.500h10V0M.5 16v-2.500h10V16M14.500 0v16"/><path d="M13 5.500h3v3h-3z" fill="#fff" stroke="none"/></svg></button>
    <button aria-label="Explorer" class="mx-1 w-[41px] border-[#76b9ed]"><svg class="size-6" viewBox="0 0 24 24"><path d="M1 3h8l2 2h12v16H1z" fill="#f0a818"/><path d="M1 7h22v14H1z" fill="#fcd562"/><path d="M5 13h14v8h-4v-4H9v4H5z" fill="#2f9be4"/></svg></button>
    <button aria-label="Dienste" class="mx-1 w-[41px] border-[#76b9ed]"><svg class="size-6" viewBox="0 0 24 24"><use href="#gear" width="17" height="17"/><use href="#gear" x="14" y="14" width="10" height="10"/></svg></button>
    <button aria-label="Lizenzverwaltung" class="w-[49px] border-transparent"><svg class="size-6" viewBox="0 0 24 24"><path d="M1 4h22v19H1z" fill="#e8d5b0"/><path d="M3 6h18v15H3z" fill="#f8f4ea"/><circle cx="14" cy="9" r="8" fill="#8fa6ba"/><use href="#gear" x="6" y="1" width="16" height="16"/><circle cx="8" cy="15" r="3.500" fill="#e8a020"/><path d="M6 18l-1 6 3-2 3 2-1-6z" fill="#2f6fd0"/></svg></button>
    <button aria-label="Leistungsmonitor" class="w-[49px] border-transparent"><svg class="size-6" viewBox="0 0 24 24"><path d="M6 2l17 2v13l-15 2z" fill="#a8acb0"/><path d="M1 4l17-1 1 14-16 1z" fill="#c9cdd0"/><path d="M3 6l13-1 1 10-13 1z" fill="#f8fbfd"/><path d="M4 13l3-4 2 4 3-6 2 6 2-1" fill="none" stroke="#2f8fd0"/><path d="M10 18h6l2 4H9z" fill="#c8ccd0"/></svg></button>
    <button aria-label="DOCUframe" class="w-[49px] border-[#76b9ed] bg-[#333]"><svg class="h-[24px] w-[22px]"><use href="#docu"/></svg></button>
    <button aria-label="Chrome" class="mx-1 w-[41px] border-[#76b9ed]"><svg class="size-6" viewBox="0 0 24 24"><circle cx="12" cy="12" r="12" fill="#fbc116"/><path d="M12 12L1.600 6A12 12 0 0 0 12 24l5-9z" fill="#269a48"/><path d="M12 6h10.400A12 12 0 0 0 1.600 6L7 14z" fill="#e33b2e"/><circle cx="12" cy="12" r="5.800" fill="#fff"/><circle cx="12" cy="12" r="4.600" fill="#2f7de9"/></svg></button>
    <button aria-label="Power BI" class="w-[49px] border-transparent"><svg class="size-6" viewBox="0 0 24 24"><rect x="1.500" y="1.500" width="21" height="21" rx="4" fill="#fff" stroke="#ecb010" stroke-width="2"/><rect x="5" y="14" width="4" height="6" rx="1" fill="#ecb010"/><rect x="10.500" y="10" width="4" height="10" rx="1" fill="#ecb010"/><rect x="16" y="5" width="4" height="15" rx="1" fill="#ecb010"/></svg></button>
  </div>
  <div class="mr-1 ml-auto flex items-center border-r border-[#555] pr-3">
    <svg class="mr-2 h-3 w-[14px]" viewBox="0 0 14 12"><path d="M1 9l6-6 6 6" fill="none" stroke="#fff" stroke-width="1.300"/></svg>
    <svg class="mr-2 size-4" viewBox="0 0 16 16"><path d="M1 5.500h2.500L7 2v12l-3.500-3.500H1z" fill="none" stroke="#fff"/><circle cx="11.500" cy="11.500" r="4.500" fill="#d8252f"/><path d="M10 10l3 3M13 10l-3 3" stroke="#fff"/></svg>
    <svg class="mr-[10px] size-4" viewBox="0 0 16 16" fill="none" stroke="#fff"><path d="M5 3.500h10.500v8H3.500V7M9.500 11.500V15M6 15h7M.5 1.500h4v4h-4zM2.500 5.500V7"/></svg>
    <div class="w-[54px] text-center leading-[18px] whitespace-nowrap">08:32<br>13.05.2025</div>
    <div class="relative ml-[18px] size-6">
      <svg class="size-6" viewBox="0 0 24 24"><path d="M1 2h16v12h-7l-5 4v-4H1z" fill="#fff"/><path d="M4 5.500h10M4 8.500h10M4 11.500h7" stroke="#000"/><circle cx="16.500" cy="16.500" r="7" fill="#333" stroke="#888"/></svg>
      <span class="absolute top-2 left-[13px]">1</span>
    </div>
  </div>
</footer>

<div role="dialog" aria-labelledby="dlg" class="absolute top-[678px] left-[644px] z-20 flex h-[124px] w-[381px] flex-col border border-[#666] bg-white">
  <h2 id="dlg" class="pt-1.5 pl-2">DOCUframe</h2>
  <div class="flex flex-1 items-start gap-[11px] pt-[17px] pl-[11px]">
    <svg class="h-8 w-[30px]" viewBox="0 0 30 32"><ellipse cx="15" cy="16" rx="14.500" ry="15" fill="#8ab6f0" stroke="#6a94cc"/><path d="M10.500 12c0-6.500 9-6.500 9 0 0 3.500-4.500 3.500-4.500 8" fill="none" stroke="#fff" stroke-width="2.600"/><circle cx="15" cy="24.500" r="1.700" fill="#fff"/></svg>
    <p class="pt-[5px]">Es werden 7 Mängel/Fehlmaterialien auf „erledigt“ gesetzt.</p>
  </div>
  <div class="flex h-[41px] items-start justify-end gap-2 border-t border-[#dfdfdf] bg-[#f0f0f0] pt-[9px] pr-[11px]">
    <button class="h-[21px] w-[66px] border-2 border-[#0078d7] bg-[#e1e1e1] leading-4">Ja</button>
    <button class="h-[21px] w-[66px] border border-[#adadad] bg-[#e1e1e1] leading-4">Nein</button>
  </div>
</div>

<script>
const F = 'erfasst mit Frist', E = 'erfasst', EM = 'Elektriker:Mayer Elektroinstallationen Gr', SV = 'P-00006 / Stadtvilla_', BB = '15.12.2021 - Baustellenbesuch - V', K = 'C8JGL';
// Projekt, Ursprung, Vorgang, beheben, Betrag, Bearbeitung, Frist, Druck, Klassifizierung, Auftrag, Zustand, Klasse
const data = [
 ['H-2500002 / EFH-He','','Elektroinstallation','Elektriker:Huberer/Walter','100,00 €',F,'24.04.2025','','-',''],
 ['H-2500002 / EFH-He','','','','0,00 €',E,'','','-',''],
 ['H-2500010 / EHF-Bö','','','Erdbauer:Erdbau-Profi/','0,00 €',F,'12.08.2025','','-',''],
 ['H-2500057 / Palast_E','','','','0,00 €',E,'','','-',''],
 ['O-2500000 / Büro_Be','','','','0,00 €',F,'24.03.2025','','-',''],
 ['P-00003 / EFH_Merte','','','Einkauf/Rechnungsprüfung:Herr Boeke','0,00 €',F,'06.03.2025','','Versicherungsfall','','s'],
 ['P-00003 / EFH_Merte','Kundenanruf vom 25.02.2025','',EM,'0,00 €',F,'03.03.2025','13.03.2025','Serviceleistung - k',K,'s'],
 ['P-00003 / EFH_Merte','','','Bauleiter:Herr Boeker/Andreas','0,00 €',F,'17.03.2025','','-',K,'s'],
 ['P-00003 / EFH_Merte','','',EM,'0,00 €',E,'','','Serviceleistung - k','','s'],
 ['P-00003 / EFH_Merte','06.03.2025 - Bauprotokoll - test -','',EM,'0,00 €',F,'24.03.2025','07.03.2025','Restarbeiten','','s'],
 ['P-00003 / EFH_Merte','06.03.2025 - Bauprotokoll - test -','Elektroinstallation','','0,00 €',E,'','','-','','s','Fehlma'],
 ['P-00005 / REH_Schu','Kundenanruf vom 08.01.2024','',EM,'0,00 €',F,'31.01.2024','11.01.2024','-','','f'],
 ['P-00005 / REH_Schu','11.01.2024 - Baustellenbesuch - V','',EM,'0,00 €',F,'22.01.2024','11.01.2024','Kundendienst',''],
 ['P-00005 / REH_Schu','25.10.2023 - Baustellenbesuch - V','',EM,'0,00 €',F,'30.10.2023','17.01.2025','Restarbeiten',''],
 [SV,BB,'','','0,00 €',E,'','','-',K],
 [SV,BB,'','','0,00 €',E,'','','-',K],
 [SV,BB,'','','0,00 €',E,'','','-',K],
 [SV,'Kundenanruf vom 02.09.2022','','Sanitärinstallateur:Technische Installatic','0,00 €',F,'12.09.2022','','-',K],
 [SV,BB,'','','0,00 €',E,'','','-',K],
 [SV,BB,'','','0,00 €',E,'','','-',K],
 [SV,BB,'','','0,00 €',E,'','','-',K],
 [SV,BB,'','','0,00 €',E,'','','-',K],
];
const rowStyle = { s: 'bg-black text-white', f: 'bg-[#3c3c3c] text-white' };
const headStyle = { s: 'bg-[#f0f0f0]', f: 'bg-[#cdcdcd]' };
const cell = (t, c = '') => `<td class="border-r border-[#d6d2c8] px-[3px] pb-[2px] ${c}"><div class="overflow-hidden whitespace-nowrap">${t}</div></td>`;
document.getElementById('rows').innerHTML = data.map(r => {
  const st = r[10];
  const line = `<span class="mx-auto block h-px w-12 ${st === 's' ? 'bg-[#444]' : st === 'f' ? 'bg-[#424242]' : 'bg-[#b8b8b8]'}"></span>`;
  return `<tr class="h-[21px] ${rowStyle[st] || ''}">
    <td class="border-r border-b border-[#a0a0a0] ${headStyle[st] || 'bg-white'}"></td>
    <td class="border-r border-[#eaeaea] pr-[3px] pb-[2px] pl-1 ${st === 'f' ? 'bg-[#969696]' : ''}"><div class="flex items-center gap-1 overflow-hidden whitespace-nowrap"><svg class="size-[15px] shrink-0"><use href="#book"/></svg>${r[11] || 'Mange'}</div></td>`
    + cell(r[0]) + cell(r[1]) + cell(r[2]) + cell(r[3]) + cell('') + cell(r[4], 'text-right') + cell(r[5]) + cell(r[6]) + cell(r[7]) + cell('') + cell(r[8]) + cell('neu') + cell(r[9] || line)
    + '</tr>';
}).join('');
</script>
</body>
</html>
